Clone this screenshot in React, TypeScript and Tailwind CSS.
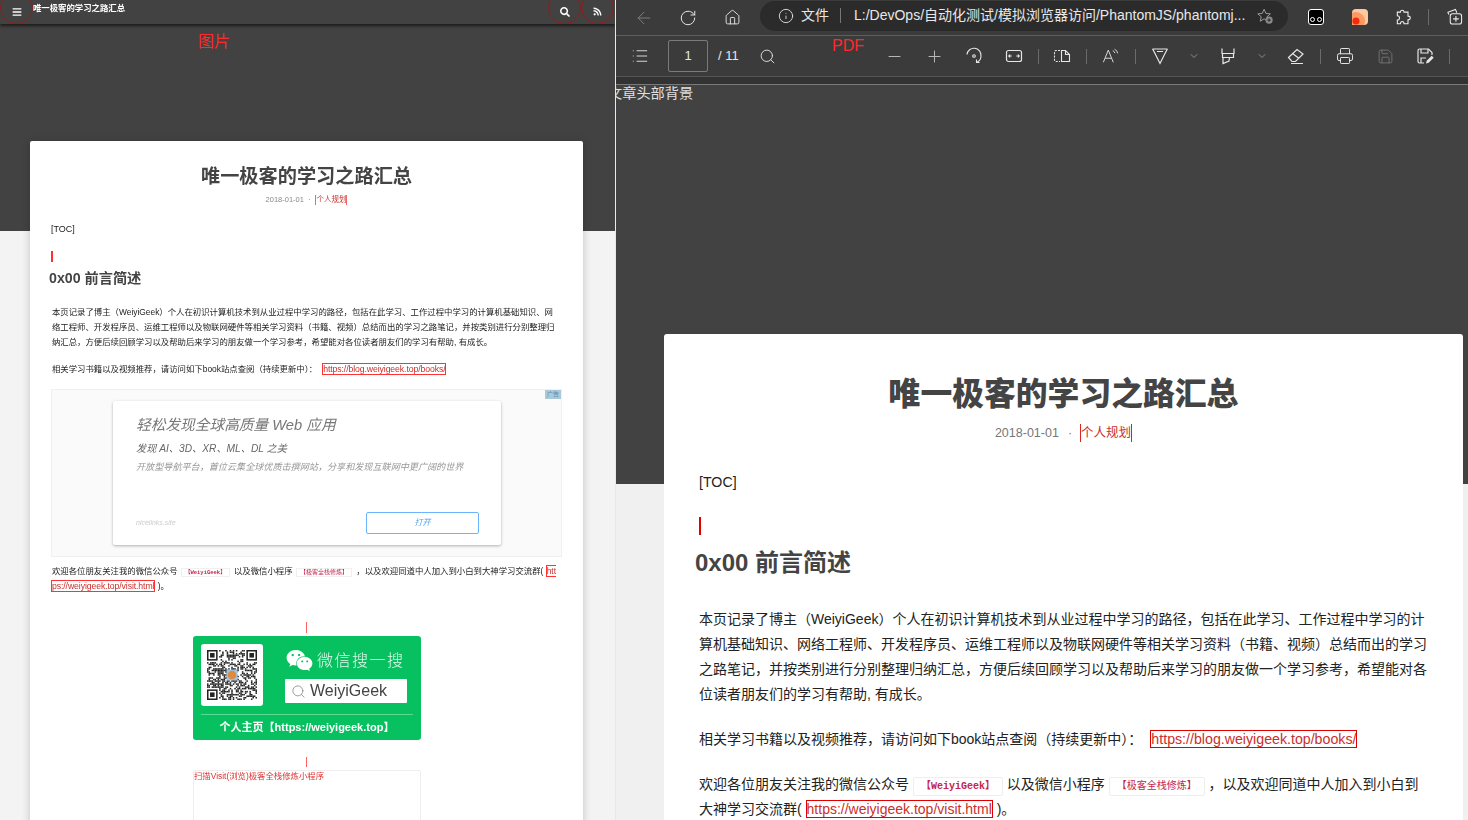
import React from "react";
import { ArrowLeft, ChevronDown, Home, Info, List, Minus, Plus, Printer, RotateCw, Save, Search } from "lucide-react";
import { FaBars, FaRss, FaSearch, FaWeixin } from "react-icons/fa";

const FONT = "font-['Liberation_Sans','Noto_Sans_CJK_SC',sans-serif]";

// pseudo random module pattern for the qr code
function QrCode() {
  const cells: React.ReactNode[] = [];
  const size = 33;
  const inFinder = (x: number, y: number) =>
    (x < 8 && y < 8) || (x > size - 9 && y < 8) || (x < 8 && y > size - 9);
  for (let y = 0; y < size; y++) {
    for (let x = 0; x < size; x++) {
      if (inFinder(x, y)) continue;
      const n = Math.sin(x * 12.9898 + y * 78.233) * 43758.5453;
      if (n - Math.floor(n) < 0.52) {
        cells.push(<rect key={`${x}-${y}`} x={x} y={y} width="1" height="1" />);
      }
    }
  }
  const finder = (x: number, y: number) => (
    <g key={`f${x}${y}`}>
      <rect x={x} y={y} width="7" height="7" />
      <rect x={x + 1} y={y + 1} width="5" height="5" fill="#fff" />
      <rect x={x + 2} y={y + 2} width="3" height="3" />
    </g>
  );
  return (
    <svg viewBox="0 0 33 33" className="w-[50px] h-[50px]" fill="#222">
      {cells}
      {finder(0, 0)}
      {finder(26, 0)}
      {finder(0, 26)}
      <rect x="13" y="13" width="7" height="7" fill="#9dc3e6" />
      <circle cx="16.5" cy="16.5" r="2.800" fill="#e08a3c" />
    </svg>
  );
}

function Btn({ w = "w-10", children }: { w?: string; children: React.ReactNode }) {
  return <div className={`${w} h-full flex items-center justify-center shrink-0`}>{children}</div>;
}

function Sep({ h = "h-[15px]" }: { h?: string }) {
  return <div className={`w-px ${h} bg-[#6b6b6b] shrink-0`} />;
}

function BrowserBar() {
  return (
    <div className="h-[36px] bg-[#3b3b3b] border-b border-[#5e5e5e] flex items-center text-[#e8e8e8] shrink-0">
      <Btn w="w-[56px]"><ArrowLeft size={20} strokeWidth={1.2} className="text-[#7d7d7d]" /></Btn>
      <Btn w="w-[32px]"><RotateCw size={18} strokeWidth={1.3} /></Btn>
      <Btn w="w-[56px]"><Home size={17} strokeWidth={1.3} /></Btn>
      <div className="w-[528px] h-[30px] -mt-[4px] rounded-full bg-[#2b2b2b] flex items-center pl-[18px] pr-[14px] shrink-0">
        <Info size={16} strokeWidth={1.3} className="shrink-0" />
        <span className="ml-[7px] text-[14px] whitespace-nowrap shrink-0">文件</span>
        <div className="w-px h-[15px] bg-[#777] ml-[11px] shrink-0" />
        <span className="ml-[13px] text-[14px] whitespace-nowrap w-[394px] overflow-hidden">L:/DevOps/自动化测试/模拟浏览器访问/PhantomJS/phantomj...</span>
        <svg viewBox="0 0 20 20" className="w-[18px] h-[18px] ml-auto text-[#9a9a9a] shrink-0" fill="none" stroke="currentColor" strokeWidth="1.100">
          <path d="M9 2.500l2 4.600 5 .5-3.800 3.300 1.100 4.900L9 13.200l-4.300 2.600 1.100-4.900L2 7.600l5-.5z" />
          <circle cx="14.500" cy="14.500" r="4" fill="#8a8a8a" stroke="none" />
          <path d="M14.500 12.500v4M12.500 14.500h4" stroke="#2b2b2b" />
        </svg>
      </div>
      <div className="flex items-center h-full -mt-[2px] shrink-0">
        <Btn w="w-[56px]">
          <div className="w-[16px] h-[16px] rounded-[3px] bg-black border border-white relative">
            <div className="absolute bottom-[2px] left-[1px] w-[5px] h-[5px] rounded-full border border-white" />
            <div className="absolute bottom-[2px] right-[1px] w-[5px] h-[5px] rounded-full border border-white" />
          </div>
        </Btn>
        <Btn w="w-[32px]">
          <svg viewBox="0 0 16 16" className="w-[16px] h-[16px]">
            <rect width="16" height="16" rx="4" fill="#ffc9a0" />
            <circle cx="4" cy="12" r="9" fill="#fb9a62" />
            <circle cx="4" cy="12" r="3.500" fill="#f42a12" />
          </svg>
        </Btn>
        <Btn w="w-[52px]">
          <svg viewBox="0 0 18 18" className="w-[16px] h-[16px] ml-[4px]" fill="none" stroke="#eee" strokeWidth="1.200">
            <path d="M7 1.500c1.500 0 2 1 2 2h4.500v4.500c1 0 2.500.5 2.500 2s-1.500 2-2.500 2v4.500H9c0-1-.5-2.500-2-2.500s-2 1.500-2 2.500H1.500v-4c1.500 0 2.500-1 2.500-2.500S3 7.500 1.500 7.500v-4H5c0-1 .5-2 2-2z" />
          </svg>
        </Btn>
        <Sep h="h-[16px]" />
        <Btn w="w-[50px]">
          <svg viewBox="0 0 18 18" className="w-[17px] h-[17px]" fill="none" stroke="#eee" strokeWidth="1.100">
            <path d="M3 7L2 4.500 10 1.500 11.500 5" />
            <rect x="4.500" y="6" width="12" height="11" rx="2.500" />
            <path d="M10.500 8.500v6M7.500 11.500h6" />
          </svg>
        </Btn>
      </div>
    </div>
  );
}

function PdfToolbar() {
  const ic = "w-[18px] h-[18px]";
  return (
    <div className="h-[41px] bg-[#3b3b3b] border-b border-[#565656] flex items-center text-[#e6e6e6] shrink-0 pl-[4px] relative">
      <Btn><List size={18} strokeWidth={1.2} /></Btn>
      <div className="ml-[8px] w-[40px] h-[32px] border border-[#7a7a7a] rounded-[2px] flex items-center justify-center text-[13px]">1</div>
      <span className="ml-[10px] w-[29px] text-[13px] whitespace-nowrap">/ 11</span>
      <Btn><Search size={17} strokeWidth={1.3} /></Btn>
      <div className="w-[87px]" />
      <Btn><Minus size={19} strokeWidth={1.2} className="text-[#bdbdbd]" /></Btn>
      <Btn><Plus size={19} strokeWidth={1.2} className="text-[#bdbdbd]" /></Btn>
      <Btn>
        <svg viewBox="0 0 18 18" className={ic} fill="none" stroke="currentColor" strokeWidth="1.100">
          <path d="M2 7.500A7 7 0 0 1 16 9a7 7 0 0 1-4 6.300" />
          <path d="M11.500 12.500v3h3" />
          <circle cx="9" cy="9" r="1.300" />
        </svg>
      </Btn>
      <Btn>
        <svg viewBox="0 0 18 18" className={ic} fill="none" stroke="currentColor" strokeWidth="1.200">
          <rect x="1.500" y="3.500" width="15" height="11" rx="2" />
          <path d="M3.800 9h3M5 7.500L3.800 9 5 10.500M14.200 9h-3M13 7.500L14.200 9 13 10.500" />
        </svg>
      </Btn>
      <div className="w-[4px]" />
      <Sep />
      <div className="w-[3px]" />
      <Btn>
        <svg viewBox="0 0 18 18" className={ic} fill="none" stroke="currentColor" strokeWidth="1.100">
          <path d="M7 3.500H3a1.500 1.500 0 0 0-1.500 1.500v8A1.500 1.500 0 0 0 3 14.500h4" strokeDasharray="2 1.200" />
          <path d="M8.500 3.500h4l4 4v7h-8zM12.500 3.500v4h4" />
        </svg>
      </Btn>
      <div className="w-[4px]" />
      <Sep />
      <div className="w-[4px]" />
      <Btn>
        <svg viewBox="0 0 20 18" className={ic} fill="none" stroke="currentColor" strokeWidth="1">
          <path d="M1.500 16L7 2.500 12.500 16M3.500 11.500h7" />
          <path d="M12 3c1.200.5 2 1.500 2.300 2.800M14 1.500c1.800.8 3 2.400 3.300 4.500" />
        </svg>
      </Btn>
      <div className="w-[4px]" />
      <Sep />
      <div className="w-[4px]" />
      <Btn>
        <svg viewBox="0 0 18 18" className={ic} fill="none" stroke="currentColor" strokeWidth="1.200">
          <path d="M1.500 2h15M3 4.500l6 12 6-12M1.500 2l1.500 2.500M16.500 2L15 4.500M6 4.500h6" />
        </svg>
      </Btn>
      <Btn w="w-[28px]"><ChevronDown size={12} strokeWidth={1.2} className="text-[#bdbdbd]" /></Btn>
      <Btn>
        <svg viewBox="0 0 18 18" className={ic} fill="none" stroke="currentColor" strokeWidth="1.200">
          <path d="M3 1.500v5h12v-5M3 6.500h12M3.500 6.500v4h11v-4M4 10.500v6l6-2.500 .5-3.500" />
        </svg>
      </Btn>
      <Btn w="w-[28px]"><ChevronDown size={12} strokeWidth={1.2} className="text-[#bdbdbd]" /></Btn>
      <Btn>
        <svg viewBox="0 0 18 18" className={ic} fill="none" stroke="currentColor" strokeWidth="1.200">
          <path d="M1.500 10.500L10 2.500l6 4.500-7.500 7.500H5zM5.500 6.500l6 4.500M4 16.500h12" />
        </svg>
      </Btn>
      <div className="w-[4px]" />
      <Sep />
      <div className="w-[4px]" />
      <Btn><Printer size={18} strokeWidth={1.3} /></Btn>
      <Btn><Save size={17} strokeWidth={1.2} className="text-[#7a7a7a]" /></Btn>
      <Btn>
        <svg viewBox="0 0 18 18" className={ic} fill="none" stroke="currentColor" strokeWidth="1.200">
          <path d="M8 16H3.500a1.500 1.500 0 0 1-1.500-1.500v-11A1.500 1.500 0 0 1 3.500 2h9L16 5.500V8" />
          <path d="M5 2v4h7V2M5 16v-5h5" />
          <path d="M10 16.500l.7-2.700 5-5 2 2-5 5z" fill="currentColor" stroke="none" />
        </svg>
      </Btn>
      <div className="w-[4px]" />
      <Sep />
      <span className="absolute left-[216px] top-[-2px] text-[16px] text-[#ff2a2a]">PDF</span>
    </div>
  );
}

function LeftPane() {
  return (
    <div className="w-[615px] h-full overflow-hidden bg-[#f3f3f3] relative shrink-0">
      <div className="h-[231px] bg-[#424242]">
        <div className="h-[24px] bg-[#424242] shadow-[0_2px_3px_rgba(0,0,0,0.6)] flex items-center text-white relative">
          <div className="w-[33px] h-[32px] -mt-[8px] rounded-full border border-[#8f1d1d] flex items-center justify-center shrink-0">
            <FaBars size={10} className="mt-[7px]" />
          </div>
          <span className="-mt-[7px] text-[8.400px] font-bold whitespace-nowrap blur-[0.3px]">唯一极客的学习之路汇总</span>
          <div className="ml-auto flex items-center mr-px">
            <div className="w-[33px] h-[32px] -mt-[8px] rounded-full border border-[#8f1d1d] flex items-center justify-center">
              <FaSearch size={10} className="mt-[7px]" />
            </div>
            <div className="w-[33px] h-[32px] -mt-[8px] rounded-full border border-[#8f1d1d] flex items-center justify-center">
              <FaRss size={9} className="mt-[7px]" />
            </div>
          </div>
        </div>
        <span className="absolute left-[198px] top-[30px] text-[16px] text-[#ff2a2a]">图片</span>
      </div>

      <div className="-mt-[90px] ml-[30px] w-[553px] bg-white rounded-[2px] shadow-[0_1px_8px_rgba(0,0,0,0.2)] h-[760px] relative text-[#222] blur-[0.5px]">
        <h1 className="pt-[22px] text-center text-[19.200px] leading-[28px] font-bold text-[#444]">唯一极客的学习之路汇总</h1>
        <div className="mt-[4px] flex justify-center items-center text-[7.500px] leading-[10px] text-[#888]">
          <span>2018-01-01</span>
          <span className="mx-[4px]">·</span>
          <span className="ml-[1px] text-[#c9302c] border-x border-[#e66]">个人规划</span>
        </div>
        <div className="ml-[21px] mt-[18px] text-[9px] leading-[12px]">[TOC]</div>
        <div className="ml-[21px] mt-[16px] w-[2px] h-[11px] bg-[#ff3030]" />
        <h2 className="ml-[19px] mt-[7px] text-[14.200px] leading-[18px] font-bold text-[#444]">0x00 前言简述</h2>
        <p className="ml-[22px] mt-[18px] text-[8.400px] leading-[15px] whitespace-nowrap">
          本页记录了博主（WeiyiGeek）个人在初识计算机技术到从业过程中学习的路径，包括在此学习、工作过程中学习的计算机基础知识、网<br />
          络工程师、开发程序员、运维工程师以及物联网硬件等相关学习资料（书籍、视频）总结而出的学习之路笔记，并按类别进行分别整理归<br />
          纳汇总，方便后续回顾学习以及帮助后来学习的朋友做一个学习参考，希望能对各位读者朋友们的学习有帮助, 有成长。
        </p>
        <p className="ml-[22px] mt-[12px] text-[8.400px] leading-[15px] whitespace-nowrap">
          相关学习书籍以及视频推荐，请访问如下book站点查阅（持续更新中）：<a className="ml-[5px] border border-[#f33] text-[#c9302c] text-[8.700px] leading-[11px] tracking-[-0.1px]">https://blog.weiyigeek.top/books/</a>
        </p>
        <div className="ml-[21px] mt-[12px] w-[511px] h-[168px] bg-[#fafafa] border border-[#f0f0f0] relative pt-[11px] pl-[61px]">
          <span className="absolute right-0 top-0 bg-[#a9c8d8] text-[6px] leading-[9px] px-[2px] text-[#5d8fb0]">广告</span>
          <div className="w-[388px] h-[144px] bg-white shadow-[0_1px_3px_rgba(0,0,0,0.3)] rounded-[2px] pl-[23px] pr-[22px] pt-[16px] italic relative">
            <div className="text-[14.700px] leading-[17px] text-[#777]">轻松发现全球高质量 Web 应用</div>
            <div className="mt-[8px] text-[10.200px] leading-[13px] text-[#666]">发现 AI、3D、XR、ML、DL 之美</div>
            <div className="mt-[6px] text-[9.100px] leading-[13px] text-[#999] whitespace-nowrap">开放型导航平台，首位云集全球优质击撰网站，分享和发现互联网中更广阔的世界</div>
            <span className="absolute left-[23px] bottom-[17px] text-[7px] text-[#ccc]">nicelinks.site</span>
            <div className="absolute right-[22px] bottom-[11px] w-[113px] h-[22px] border border-[#6bb5ff] rounded-[2px] text-[8px] flex items-center justify-center text-[#4f9fe8]">打开</div>
          </div>
        </div>
        <p className="ml-[22px] mt-[7px] text-[8.400px] leading-[15px] whitespace-nowrap">
          欢迎各位朋友关注我的微信公众号 <code className="ml-[1px] mr-[2px] font-['Liberation_Mono','Noto_Sans_CJK_SC'] leading-[10px] bg-white border border-[#f0f0f0] px-[3px] text-[5.500px] text-[#c7254e] font-bold">【WeiyiGeek】</code> 以及微信小程序 <code className="ml-[1px] mr-[2px] font-['Liberation_Mono','Noto_Sans_CJK_SC'] leading-[10px] bg-white border border-[#f0f0f0] px-[3px] text-[6px] text-[#c7254e]">【极客全栈修炼】</code> ，以及欢迎同道中人加入到小白到大神学习交流群( <a className="border border-[#f33] border-r-0 text-[#c9302c] leading-[11px]">htt</a><br />
          <a className="-ml-px border border-[#f33] text-[#c9302c] text-[8.700px] leading-[11px] tracking-[-0.1px]">ps://weiyigeek.top/visit.html</a> )。
        </p>
        <div className="ml-[276px] mt-[28px] w-px h-[11px] bg-[#ff6060]" />
        <div className="ml-[163px] mt-[3px] w-[228px] h-[104px] rounded-[3px] bg-[#07c160] p-[8px] text-white">
          <div className="flex">
            <div className="w-[62px] h-[62px] bg-white rounded-[3px] flex items-center justify-center shrink-0"><QrCode /></div>
            <div className="ml-[22px] w-[122px]">
              <div className="flex items-center h-[33px] pl-[1px]">
                <FaWeixin size={27} className="text-white shrink-0" />
                <span className="ml-[4px] text-[16px] tracking-[1.500px] text-[#e6f9ef] font-light whitespace-nowrap">微信搜一搜</span>
              </div>
              <div className="mt-[2px] h-[24px] bg-white rounded-[1px] flex items-center pl-[6px] text-[#444] text-[16px]">
                <Search size={15} strokeWidth={1.3} className="text-[#888] shrink-0" />
                <span className="ml-[4px] leading-[24px]">WeiyiGeek</span>
              </div>
            </div>
          </div>
          <div className="mt-[8px] h-px bg-[#5bd992]" />
          <div className="mt-[4px] text-center text-[11px] leading-[16px] font-bold whitespace-nowrap">个人主页【https://weiyigeek.top】</div>
        </div>
        <div className="ml-[276px] mt-[17px] w-px h-[10px] bg-[#ff6060]" />
        <div className="ml-[163px] mt-[3px] w-[228px] h-[80px] border border-[#eee] rounded-[2px] text-[8.400px] leading-[10px] text-[#d33] whitespace-nowrap">扫描Visit(浏览)极客全栈修炼小程序</div>
      </div>
    </div>
  );
}

function RightPane() {
  return (
    <div className="flex-1 min-w-0 h-full flex flex-col overflow-hidden bg-[#f0f0f0]">
      <BrowserBar />
      <PdfToolbar />
      <div className="h-[8px] bg-[#333333] border-b border-[#7a7a7a] shrink-0" />
      <div className="flex-1 overflow-hidden">
        <div className="h-[399px] bg-[#424242] text-[#e0e0e0] text-[14.200px] leading-[16px] overflow-hidden whitespace-nowrap">
          <span className="block -ml-[8px]">文章头部背景</span>
        </div>
        <div className="-mt-[150px] ml-[48px] mr-[5px] h-[600px] bg-white rounded-[3px] text-[#222] text-[14.200px]">
          <h1 className="pt-[38px] text-center text-[31.800px] leading-[44px] font-black text-[#444]">唯一极客的学习之路汇总</h1>
          <div className="mt-[8px] flex justify-center items-center text-[12.500px] leading-[18px] text-[#777]">
            <span>2018-01-01</span>
            <span className="mx-[9px]">·</span>
            <span className="-ml-[1px] text-[#c9302c] border-x border-[#d22]">个人规划</span>
          </div>
          <div className="ml-[35px] mt-[30px] leading-[20px]">[TOC]</div>
          <div className="ml-[35px] mt-[25px] w-[2px] h-[18px] bg-[#e00000]" />
          <h2 className="ml-[31px] mt-[12px] text-[24px] leading-[32px] font-bold text-[#444]">0x00 前言简述</h2>
          <p className="ml-[35px] mt-[28px] text-[14px] leading-[25px] whitespace-nowrap">
            本页记录了博主（WeiyiGeek）个人在初识计算机技术到从业过程中学习的路径，包括在此学习、工作过程中学习的计<br />
            算机基础知识、网络工程师、开发程序员、运维工程师以及物联网硬件等相关学习资料（书籍、视频）总结而出的学习<br />
            之路笔记，并按类别进行分别整理归纳汇总，方便后续回顾学习以及帮助后来学习的朋友做一个学习参考，希望能对各<br />
            位读者朋友们的学习有帮助, 有成长。
          </p>
          <p className="ml-[35px] mt-[20px] text-[14px] leading-[25px] whitespace-nowrap">
            相关学习书籍以及视频推荐，请访问如下book站点查阅（持续更新中）：<a className="ml-[8px] border border-[#e00000] text-[#c9302c] text-[14.200px] leading-[18px]">https://blog.weiyigeek.top/books/</a>
          </p>
          <p className="ml-[35px] mt-[20px] text-[14px] leading-[25px] whitespace-nowrap">
            欢迎各位朋友关注我的微信公众号 <code className="font-['Liberation_Mono','Noto_Sans_CJK_SC'] leading-[12px] bg-white border border-[#eee] rounded-[2px] px-[7px] py-[3px] text-[10px] font-bold text-[#c7254e]">【WeiyiGeek】</code> 以及微信小程序 <code className="font-['Liberation_Mono','Noto_Sans_CJK_SC'] leading-[12px] bg-white border border-[#eee] rounded-[2px] px-[7px] py-[3px] text-[10px] text-[#c7254e]">【极客全栈修炼】</code> ，以及欢迎同道中人加入到小白到<br />
            大神学习交流群( <a className="border border-[#e00000] text-[#c9302c] leading-[18px]">https://weiyigeek.top/visit.html</a> )。
          </p>
        </div>
      </div>
    </div>
  );
}

export default function App() {
  return (
    <div className={`h-[820px] w-[1468px] overflow-hidden flex ${FONT}`}>
      <LeftPane />
      <div className="w-px bg-[#e8e8e8] shrink-0" />
      <RightPane />
    </div>
  );
}
